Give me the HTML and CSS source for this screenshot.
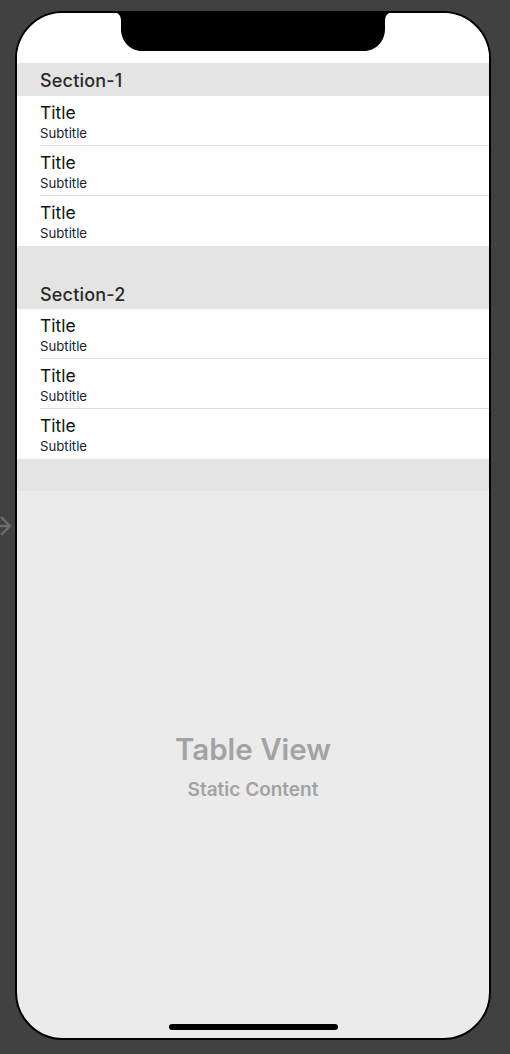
FILE: index.html
```html
<!DOCTYPE html>
<html>
<head>
<meta charset="utf-8">
<link rel="stylesheet" href="styles.css">
</head>
<body>
<svg class="entry-arrow" width="20" height="26" viewBox="0 0 20 26">
  <path d="M0 13 H16 M7 4 L16 13 L7 22" fill="none" stroke="#6b6b6b" stroke-width="2.4"/>
</svg>
<div class="phone">
  <svg class="notch" width="282" height="41" viewBox="0 0 282 41">
    <path d="M0 0 H282 C276 0 273 3 273 9 V17 C273 29 264 39 252 39 H30 C18 39 9 29 9 17 V9 C9 3 6 0 0 0 Z" fill="#000"/>
  </svg>
  <div class="status"></div>
  <div class="section-header">Section-1</div>
  <div class="row"><div class="title">Title</div><div class="subtitle">Subtitle</div></div>
  <div class="row"><div class="title">Title</div><div class="subtitle">Subtitle</div></div>
  <div class="row last"><div class="title">Title</div><div class="subtitle">Subtitle</div></div>
  <div class="section-header tall">Section-2</div>
  <div class="row"><div class="title">Title</div><div class="subtitle">Subtitle</div></div>
  <div class="row"><div class="title">Title</div><div class="subtitle">Subtitle</div></div>
  <div class="row last"><div class="title">Title</div><div class="subtitle">Subtitle</div></div>
  <div class="section-footer"></div>
  <div class="placeholder">
    <div class="ph-title">Table View</div>
    <div class="ph-sub">Static Content</div>
  </div>
  <div class="home-indicator"></div>
</div>
</body>
</html>
```
FILE: styles.css
```css
html, body {
  margin: 0;
  padding: 0;
  background: #414141;
  width: 510px;
  height: 1054px;
  overflow: hidden;
  font-family: Inter, "Noto Sans", "Liberation Sans", sans-serif;
}
body {
  position: relative;
  padding-top: 11px;
  box-sizing: border-box;
}
.entry-arrow {
  position: absolute;
  left: -6px;
  top: 513px;
}
.phone {
  position: relative;
  margin-left: 15px;
  width: 476px;
  height: 1029px;
  box-sizing: border-box;
  border: 2px solid #000;
  border-radius: 48px;
  overflow: hidden;
  background: #ebebeb;
  display: flex;
  flex-direction: column;
}
.notch {
  position: absolute;
  left: 95px;
  top: -1px;
}
.status {
  height: 50px;
  background: #fff;
  flex: none;
}
.section-header {
  height: 33px;
  flex: none;
  background: #e4e4e4;
  display: flex;
  align-items: center;
  padding-left: 23px;
  font-size: 18px;
  font-weight: 500;
  letter-spacing: 0.2px;
  color: #2a2a2a;
  padding-top: 1px;
  box-sizing: border-box;
}
.section-header.tall {
  height: 63px;
  align-items: flex-end;
  padding-bottom: 4px;
}
.row {
  height: 50px;
  flex: none;
  background: #fff;
  padding-left: 23px;
  box-sizing: border-box;
  position: relative;
  padding-top: 7px;
}
.row::after {
  content: "";
  position: absolute;
  left: 23px;
  right: 0;
  bottom: 0;
  height: 1px;
  background: #dedede;
}
.row.last::after {
  display: none;
}
.title {
  font-size: 17.5px;
  line-height: 20px;
  color: #111;
}
.subtitle {
  font-size: 13.2px;
  line-height: 15px;
  margin-top: 3px;
  color: #222;
}
.section-footer {
  height: 32px;
  flex: none;
  background: #e4e4e4;
}
.placeholder {
  flex: 1;
  display: flex;
  flex-direction: column;
  align-items: center;
  justify-content: center;
  padding-top: 4px;
}
.ph-title {
  font-size: 29.5px;
  font-weight: 600;
  color: #a3a3a3;
  line-height: 34px;
}
.ph-sub {
  font-size: 19px;
  font-weight: 600;
  color: #a3a3a3;
  line-height: 22px;
  margin-top: 13px;
}
.home-indicator {
  position: absolute;
  left: 152px;
  bottom: 8px;
  width: 169px;
  height: 6px;
  border-radius: 3px;
  background: #000;
}
```
